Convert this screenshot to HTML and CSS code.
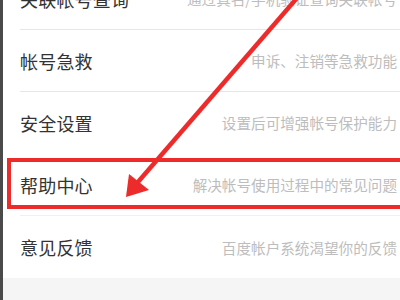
FILE: index.html
```html
<!DOCTYPE html>
<html lang="zh">
<head>
<meta charset="utf-8">
<link rel="stylesheet" href="styles.css">
</head>
<body>
<div class="page">
  <ul class="list">
    <li class="row"><span class="title">关联帐号查询</span><span class="desc">通过真名/手机验证查询关联帐号</span></li>
    <li class="row"><span class="title">帐号急救</span><span class="desc">申诉、注销等急救功能</span></li>
    <li class="row plain"><span class="title">安全设置</span><span class="desc">设置后可增强帐号保护能力</span></li>
    <li class="row faint"><span class="title">帮助中心</span><span class="desc">解决帐号使用过程中的常见问题</span></li>
    <li class="row last"><span class="title">意见反馈</span><span class="desc">百度帐户系统渴望你的反馈</span></li>
  </ul>
  <div class="footer"></div>
  <div class="highlight"></div>
  <svg class="arrow" width="400" height="300" viewBox="0 0 400 300">
    <line x1="297" y1="-2" x2="138" y2="182" stroke="#ee2b2b" stroke-width="4.5"/>
    <polygon points="126,197 129,174 149,190" fill="#ee2b2b"/>
  </svg>
</div>
</body>
</html>
```
FILE: styles.css
```css
html, body {
  margin: 0;
  padding: 0;
  background: #ffffff;
}
.page {
  position: relative;
  width: 400px;
  height: 300px;
  overflow: hidden;
  border-left: 3px solid #4a4a4a;
  box-sizing: border-box;
  font-family: "Noto Sans CJK SC", "Noto Sans", sans-serif;
}
.list {
  list-style: none;
  margin: -32px 0 0 0;
  padding: 0;
}
.row {
  height: 61px;
  margin-left: 17px;
  border-bottom: 1px solid #e6e6e6;
  display: flex;
  align-items: center;
  justify-content: space-between;
  padding-right: 3px;
  white-space: nowrap;
}
.row.plain {
  border-bottom-color: #ffffff;
}
.row.faint {
  border-bottom-color: #f6eeee;
}
.row.last {
  border-bottom: none;
  height: 62px;
}
.title {
  font-size: 18px;
  color: #333333;
  letter-spacing: 0.2px;
}
.desc {
  font-size: 14.6px;
  color: #bdbdbd;
}
.footer {
  height: 30px;
  background: #f5f5f5;
}
.highlight {
  position: absolute;
  left: 4px;
  top: 158px;
  width: 410px;
  height: 51px;
  border: 4.5px solid #ee2b2b;
  box-sizing: border-box;
}
.arrow {
  position: absolute;
  left: -3px;
  top: 0;
}
```
